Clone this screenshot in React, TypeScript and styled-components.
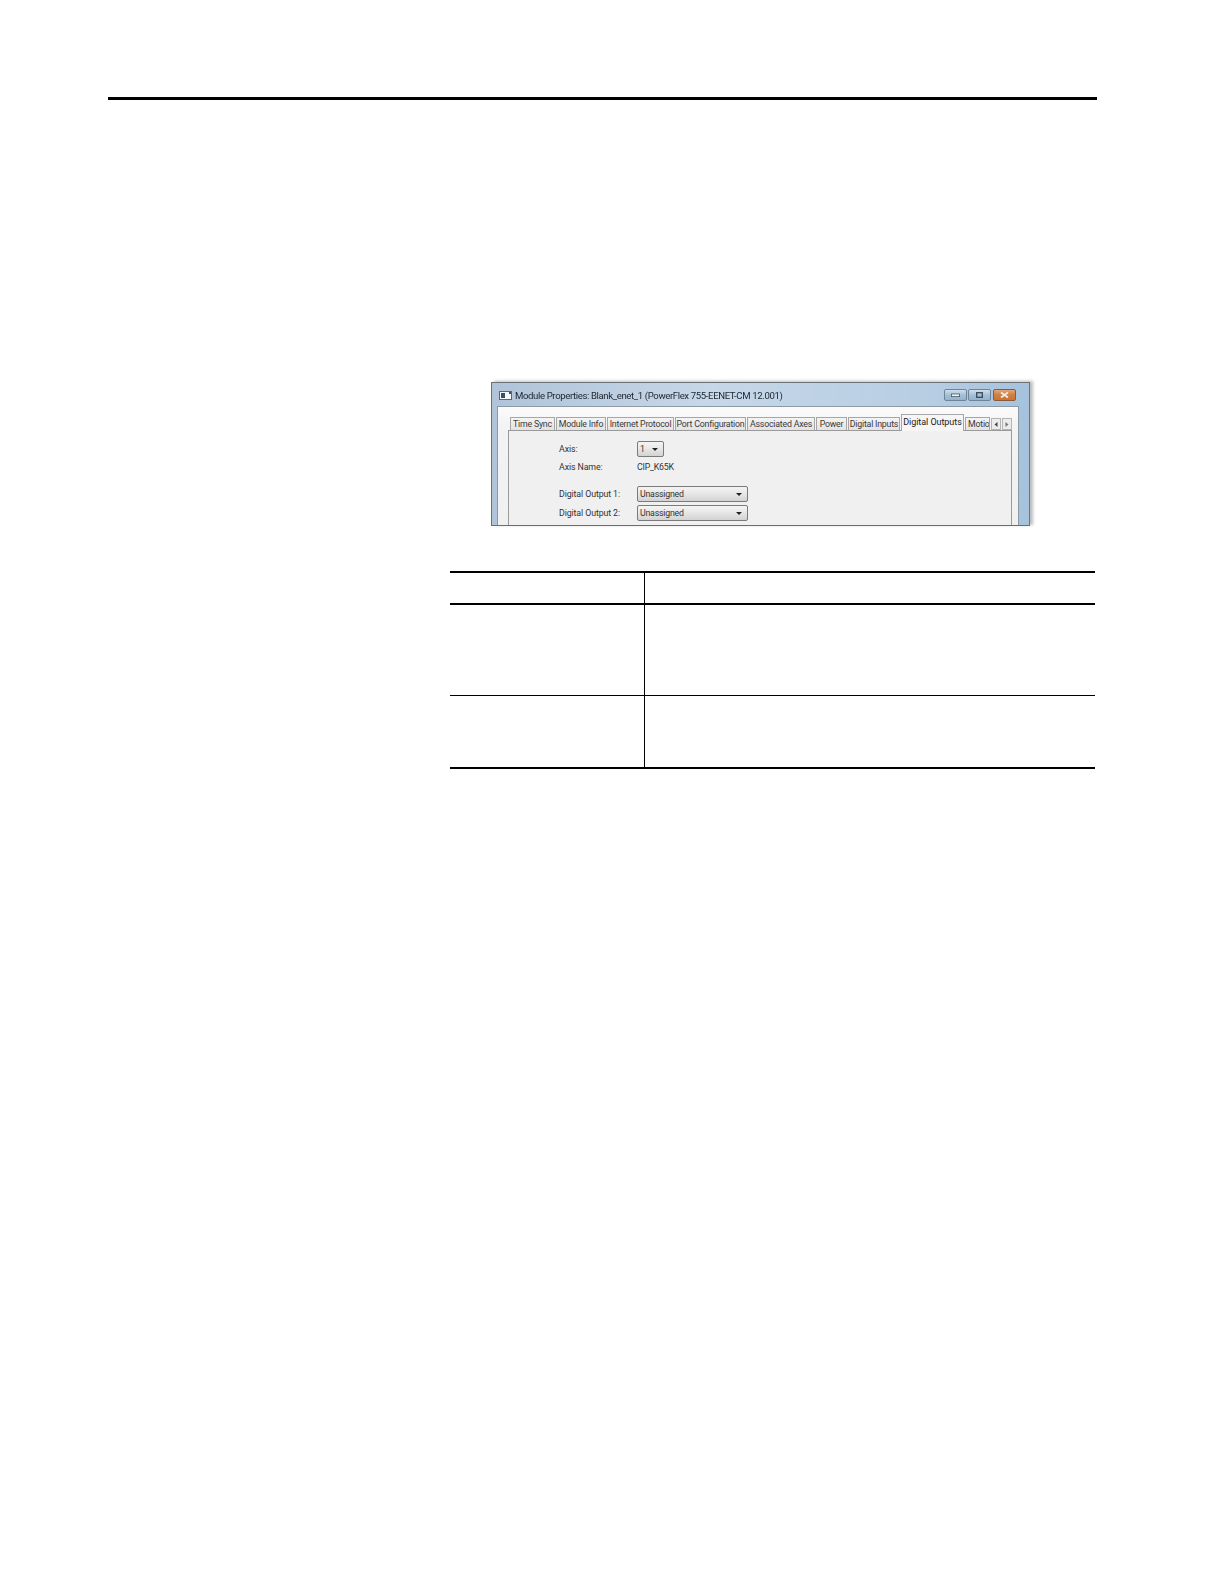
import React from 'react';
import styled, { createGlobalStyle } from 'styled-components';

const GlobalStyle = createGlobalStyle`
  html, body {
    margin: 0;
    padding: 0;
    background: #fff;
  }
`;

const tabs = [
  { label: 'Time Sync', width: 45 },
  { label: 'Module Info', width: 50 },
  { label: 'Internet Protocol', width: 67 },
  { label: 'Port Configuration', width: 71 },
  { label: 'Associated Axes', width: 68 },
  { label: 'Power', width: 31 },
  { label: 'Digital Inputs', width: 52 },
];

export default function App() {
  return (
    <Page>
      <GlobalStyle />
      <TopRule />
      <DialogWindow>
        <TitleBar>
          <AppIcon viewBox="0 0 13 9">
            <rect x="0.5" y="0.5" width="12" height="8" fill="#f4f6f8" stroke="#5c6670" />
            <rect x="2" y="2" width="4" height="5" fill="#39506a" />
            <rect x="10" y="1" width="2" height="2" fill="#39506a" />
          </AppIcon>
          <TitleText>Module Properties: Blank_enet_1 (PowerFlex 755-EENET-CM 12.001)</TitleText>
          <WindowButtons>
            <WindowButton>
              <svg width="9" height="4" viewBox="0 0 9 4"><rect x="0.4" y="1" width="8.2" height="2.6" fill="#f4f7fa" stroke="#4a5560" strokeWidth="0.8" /></svg>
            </WindowButton>
            <WindowButton>
              <svg width="7" height="6" viewBox="0 0 7 6"><rect x="0.7" y="0.7" width="5.6" height="4.6" fill="none" stroke="#3d4854" strokeWidth="1.3" /></svg>
            </WindowButton>
            <CloseButton>
              <svg width="9" height="6" viewBox="0 0 9 6"><path d="M1 0.5 L8 5.5 M8 0.5 L1 5.5" stroke="#f6ece6" strokeWidth="1.8" /></svg>
            </CloseButton>
          </WindowButtons>
        </TitleBar>
        <ClientArea>
          <TabStrip>
            {tabs.map((t) => (
              <Tab key={t.label} $width={t.width}>{t.label}</Tab>
            ))}
            <ActiveTab>Digital Outputs</ActiveTab>
            <ClippedTab>Motion</ClippedTab>
            <ScrollButton>
              <svg width="4" height="5" viewBox="0 0 4 5"><path d="M3.5 0 L0.5 2.5 L3.5 5 Z" fill="#444" /></svg>
            </ScrollButton>
            <ScrollButton>
              <svg width="4" height="5" viewBox="0 0 4 5"><path d="M0.5 0 L3.5 2.5 L0.5 5 Z" fill="#777" /></svg>
            </ScrollButton>
          </TabStrip>
          <TabPanel>
            <FormGrid>
              <FieldLabel>Axis:</FieldLabel>
              <Combo $width={27}>
                <ComboText>1</ComboText>
                <Caret />
              </Combo>
              <FieldLabel>Axis Name:</FieldLabel>
              <FieldValue>CIP_K65K</FieldValue>
              <Spacer />
              <FieldLabel>Digital Output 1:</FieldLabel>
              <Combo $width={111}>
                <ComboText>Unassigned</ComboText>
                <Caret />
              </Combo>
              <FieldLabel>Digital Output 2:</FieldLabel>
              <Combo $width={111}>
                <ComboText>Unassigned</ComboText>
                <Caret />
              </Combo>
            </FormGrid>
          </TabPanel>
        </ClientArea>
      </DialogWindow>
      <RuledTable>
        <TableRow $height={30} $border={2}>
          <LeftCell />
          <RightCell />
        </TableRow>
        <TableRow $height={90} $border={1.5}>
          <LeftCell />
          <RightCell />
        </TableRow>
        <TableRow $height={70.5} $border={2}>
          <LeftCell />
          <RightCell />
        </TableRow>
      </RuledTable>
    </Page>
  );
}

const Page = styled.div`
  width: 1224px;
  height: 1584px;
  padding-top: 97px;
  box-sizing: border-box;
  background: #fff;
  overflow: hidden;
`;

const TopRule = styled.div`
  width: 989px;
  height: 3px;
  margin-left: 108px;
  background: #000;
`;

const DialogWindow = styled.div`
  width: 539px;
  height: 144px;
  margin: 282px 0 0 491px;
  box-sizing: border-box;
  display: flex;
  flex-direction: column;
  border: 1px solid #69737c;
  border-bottom: 1px solid #6d6d6d;
  box-shadow: 3px -1px 3px #bdbdbd;
  background: linear-gradient(to right, #b0c3d8 0%, #c6d7e8 40%, #b8cee3 80%, #a6c2dc 100%);
  padding: 0 10px 0 5px;
  overflow: hidden;
  font-family: Roboto, 'Noto Sans', sans-serif;
  color: #2a2a2a;
  filter: blur(0.4px);
`;

const TitleBar = styled.div`
  height: 23px;
  flex: none;
  display: flex;
  align-items: center;
  padding: 1px 0 0 2px;
  box-sizing: border-box;
`;

const AppIcon = styled.svg`
  width: 13px;
  height: 9px;
  flex: none;
`;

const TitleText = styled.span`
  margin-left: 3px;
  font-size: 9.6px;
  letter-spacing: -0.38px;
  white-space: nowrap;
  color: #1d2630;
`;

const WindowButtons = styled.div`
  margin-left: auto;
  margin-right: 3px;
  display: flex;
  gap: 1px;
`;

const WindowButton = styled.div`
  width: 23px;
  height: 12px;
  box-sizing: border-box;
  display: flex;
  align-items: center;
  justify-content: center;
  border: 1px solid #6f8497;
  border-radius: 2px;
  background: linear-gradient(to bottom, #cfdfee, #a5c0d8 50%, #93b2cd);
`;

const CloseButton = styled(WindowButton)`
  margin-left: 1px;
  border-color: #8a5a3c;
  background: linear-gradient(to bottom, #e0a67f, #cf7f3f 50%, #c9762f);
`;

const ClientArea = styled.div`
  flex: 1;
  display: flex;
  flex-direction: column;
  box-sizing: border-box;
  padding: 7px 6px 0 10px;
  background: linear-gradient(to bottom, #fbfbfb 0, #f3f3f3 20px, #f0f0f0 100%);
  border: 1px solid #8d9aa5;
  border-bottom: 0;
`;

const TabStrip = styled.div`
  height: 16px;
  flex: none;
  display: flex;
  align-items: flex-end;
  gap: 1px;
  padding-left: 2px;
  position: relative;
  z-index: 1;
`;

const Tab = styled.div<{ $width: number }>`
  width: ${(p) => p.$width}px;
  height: 13px;
  flex: none;
  box-sizing: border-box;
  display: flex;
  align-items: center;
  justify-content: center;
  padding-bottom: 1px;
  font-size: 8.8px;
  letter-spacing: -0.22px;
  white-space: nowrap;
  overflow: hidden;
  color: #3a3a3a;
  border: 1px solid #a6a6a6;
  border-bottom: 0;
  background: linear-gradient(to bottom, #f4f4f4, #e3e3e3);
`;

const ActiveTab = styled.div`
  width: 63px;
  height: 17px;
  flex: none;
  box-sizing: border-box;
  margin-bottom: -1px;
  display: flex;
  align-items: center;
  justify-content: center;
  padding-bottom: 3px;
  font-size: 9px;
  letter-spacing: -0.05px;
  white-space: nowrap;
  color: #222;
  background: #f6f6f6;
  border: 1px solid #a6a6a6;
  border-bottom: 0;
`;

const ClippedTab = styled(Tab).attrs({ $width: 25 })`
  justify-content: flex-start;
  padding-left: 2px;
`;

const ScrollButton = styled.div`
  width: 10px;
  height: 12px;
  flex: none;
  box-sizing: border-box;
  display: flex;
  align-items: center;
  justify-content: center;
  border: 1px solid #b4b4b4;
  background: #ececec;
`;

const TabPanel = styled.div`
  flex: 1;
  box-sizing: border-box;
  border: 1px solid #9a9a9a;
  border-bottom: 0;
  background: #f0f0f0;
  padding: 10px 0 0 50px;
`;

const FormGrid = styled.div`
  display: grid;
  grid-template-columns: 78px auto;
  grid-auto-rows: min-content;
  justify-content: start;
  align-items: center;
  row-gap: 3px;
`;

const FieldLabel = styled.div`
  font-size: 8.8px;
  letter-spacing: -0.1px;
  color: #333;
  white-space: nowrap;
`;

const FieldValue = styled.div`
  font-size: 8.8px;
  letter-spacing: -0.22px;
  color: #333;
  height: 14px;
  line-height: 14px;
`;

const Spacer = styled.div`
  grid-column: 1 / -1;
  height: 6px;
`;

const Combo = styled.div<{ $width: number }>`
  width: ${(p) => p.$width}px;
  height: 16px;
  box-sizing: border-box;
  display: flex;
  align-items: center;
  justify-content: space-between;
  padding: 0 5px 0 2px;
  border: 1px solid #7a7a7a;
  border-radius: 2px;
  background: linear-gradient(to bottom, #f4f4f4, #e6e6e6 50%, #d2d2d2);
`;

const ComboText = styled.span`
  font-size: 8.8px;
  letter-spacing: -0.22px;
  color: #333;
`;

const Caret = styled.span`
  width: 0;
  height: 0;
  border-left: 3.5px solid transparent;
  border-right: 3.5px solid transparent;
  border-top: 3.5px solid #222;
`;

const RuledTable = styled.div`
  width: 645px;
  margin: 45px 0 0 450px;
  border-top: 2px solid #000;
`;

const TableRow = styled.div<{ $height: number; $border: number }>`
  height: ${(p) => p.$height}px;
  box-sizing: content-box;
  display: grid;
  grid-template-columns: 195px 1fr;
  border-bottom: ${(p) => p.$border}px solid #000;
`;

const LeftCell = styled.div`
  border-right: 1.5px solid #000;
`;

const RightCell = styled.div``;
